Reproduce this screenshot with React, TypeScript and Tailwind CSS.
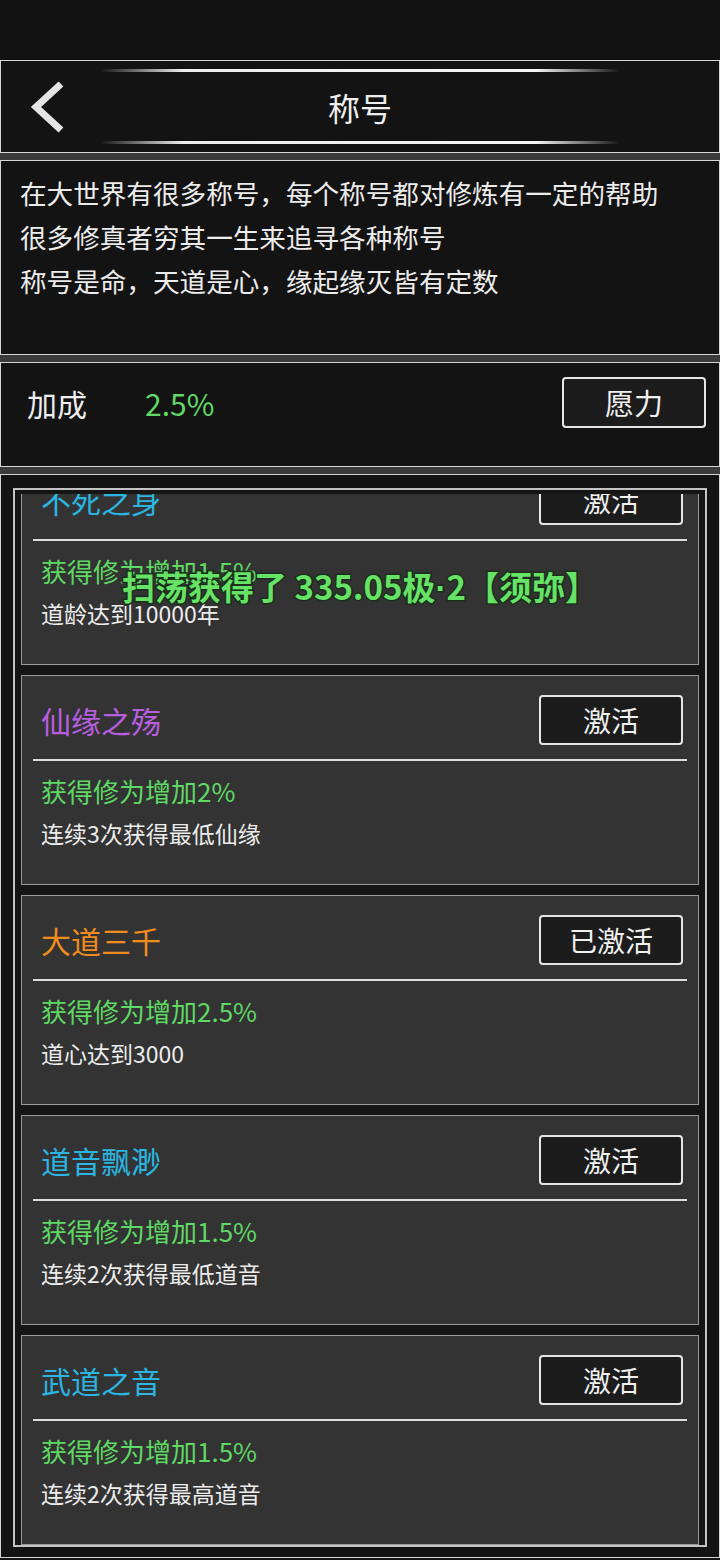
import { ReactNode } from "react"

type Title = {
  name: string
  color: string
  bonus: string
  cond: string
  state: string
}

const titles: Title[] = [
  { name: "不死之身", color: "text-[#2bb5e0]", bonus: "获得修为增加1.5%", cond: "道龄达到10000年", state: "激活" },
  { name: "仙缘之殇", color: "text-[#b85ee0]", bonus: "获得修为增加2%", cond: "连续3次获得最低仙缘", state: "激活" },
  { name: "大道三千", color: "text-[#f08c1e]", bonus: "获得修为增加2.5%", cond: "道心达到3000", state: "已激活" },
  { name: "道音飘渺", color: "text-[#2bb5e0]", bonus: "获得修为增加1.5%", cond: "连续2次获得最低道音", state: "激活" },
  { name: "武道之音", color: "text-[#2bb5e0]", bonus: "获得修为增加1.5%", cond: "连续2次获得最高道音", state: "激活" },
]

function Panel({ children, className = "" }: { children: ReactNode; className?: string }) {
  return <div className={`border border-[#d6d6d6] bg-[#131313] ${className}`}>{children}</div>
}

function Strip() {
  return <div className="h-[7px] bg-[#3a3a3a]" />
}

function Glow() {
  return (
    <div className="mx-auto h-[3px] w-[520px] bg-[linear-gradient(90deg,transparent,#eeeeee_16%,#f4f4f4_84%,transparent)]" />
  )
}

function TitleCard({ t }: { t: Title }) {
  return (
    <div className="flex h-[210px] flex-col border border-[#9a9a9a] bg-[#333333] pt-[19px]">
      <div className="flex h-[50px] items-center justify-between pl-[19px] pr-[15px]">
        <span className={`text-[30px] leading-none ${t.color}`}>{t.name}</span>
        <button className="flex h-[50px] w-[144px] items-center justify-center rounded-[4px] border-2 border-[#e6e6e6] bg-[#1c1c1c] text-[28px] text-[#f0f0f0]">
          {t.state}
        </button>
      </div>
      <div className="mx-[11px] mt-[14px] h-[2px] bg-[#dcdcdc]" />
      <div className="mt-[13px] pl-[19px] text-[26px] leading-[34px] text-[#5fd865]">{t.bonus}</div>
      <div className="mt-[9px] pl-[19px] text-[23px] leading-[32px] text-[#ececec]">{t.cond}</div>
    </div>
  )
}

export default function App() {
  return (
    <div className="relative min-h-[1560px] bg-[#131313] font-['Noto_Sans_CJK_SC','Noto_Sans',sans-serif] text-[#eeeeee]">
      <div className="h-[60px] bg-[#121212]" />

      <Panel className="flex h-[93px] flex-col pt-[8px]">
        <Glow />
        <div className="grid flex-1 grid-cols-[1fr_auto_1fr] items-center">
          <div className="pl-[29px]">
            <svg width="36" height="52" viewBox="0 0 36 52">
              <polyline points="31,3 6,26 31,49" fill="none" stroke="#e4e4e4" strokeWidth="7" />
            </svg>
          </div>
          <span className="text-[32px] leading-none">称号</span>
          <div />
        </div>
        <Glow />
        <div className="h-[8px]" />
      </Panel>

      <Strip />

      <Panel className="h-[195px] pl-[19px] pt-[10px] text-[26.6px] leading-[44px] text-[#ececec]">
        <p>在大世界有很多称号，每个称号都对修炼有一定的帮助</p>
        <p>很多修真者穷其一生来追寻各种称号</p>
        <p>称号是命，天道是心，缘起缘灭皆有定数</p>
      </Panel>

      <Strip />

      <Panel className="flex h-[105px] items-start pl-[26px] pr-[13px] pt-[14px]">
        <div className="flex h-[51px] flex-1 items-center text-[30px] leading-none">
          <span>加成</span>
          <span className="ml-[58px] text-[#5fd865]">2.5%</span>
        </div>
        <button className="flex h-[51px] w-[144px] items-center justify-center rounded-[4px] border-2 border-[#e6e6e6] bg-[#1c1c1c] text-[29px] text-[#f0f0f0]">
          愿力
        </button>
      </Panel>

      <Strip />

      <Panel className="px-[12px] pb-[10px] pt-[13px]">
        <div className="border-2 border-[#c4c4c4] bg-[#151515] px-[6px] pt-[4px]">
          <div className="h-[1051px] overflow-hidden">
            <div className="mt-[-39px] flex flex-col gap-[10px]">
              {titles.map((t) => (
                <TitleCard key={t.name} t={t} />
              ))}
            </div>
          </div>
        </div>
      </Panel>

      <div className="pointer-events-none absolute left-0 right-0 top-[564px] text-center">
        <span className="text-[33px] font-bold leading-[44px] text-[#66e266] [-webkit-text-stroke:3px_#1b2e1b] [paint-order:stroke_fill]">
          扫荡获得了 335.05极<span className="font-['Liberation_Sans',sans-serif]">·</span>2【须弥】
        </span>
      </div>
    </div>
  )
}
